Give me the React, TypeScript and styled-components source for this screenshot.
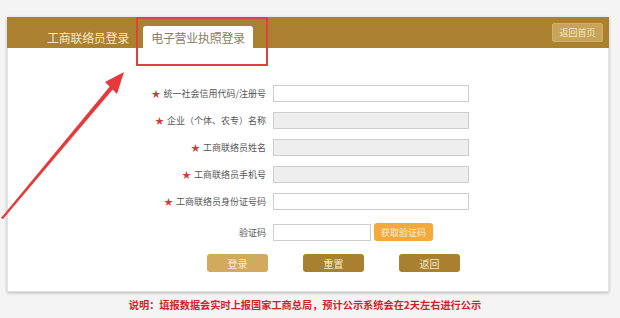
import { Fragment } from 'react';
import styled, { createGlobalStyle } from 'styled-components';

const GlobalStyle = createGlobalStyle`
  html, body {
    margin: 0;
    padding: 0;
    background: #f4f4f4;
  }
  body {
    font-family: "Noto Sans CJK SC", "Noto Sans", sans-serif;
  }
`;

const Page = styled.div`
  position: relative;
  width: 620px;
  height: 318px;
  padding: 17px 0 0 7px;
  box-sizing: border-box;
  overflow: hidden;
`;

const Panel = styled.div`
  width: 602px;
  background: #fff;
  border: 1px solid #e2e2e2;
  border-top: none;
  box-sizing: border-box;
  box-shadow: 0 1px 3px rgba(0, 0, 0, 0.25);
`;

const Header = styled.div`
  height: 31px;
  background: #aa812f;
  display: flex;
  align-items: flex-end;
  padding: 0 6px 0 26px;
  margin: 0 -1px;
`;

const Tabs = styled.div`
  display: flex;
  flex: 1;
`;

const Tab = styled.div<{ $active?: boolean }>`
  width: 110px;
  height: 22px;
  display: flex;
  align-items: center;
  justify-content: center;
  font-size: 12px;
  letter-spacing: -0.3px;
  color: ${(p) => (p.$active ? '#8d7d5f' : '#f6e7c6')};
  background: ${(p) => (p.$active ? '#fff' : 'transparent')};
  border-radius: 3px 3px 0 0;
`;

const HomeButton = styled.div`
  align-self: center;
  width: 51px;
  height: 19px;
  display: flex;
  align-items: center;
  justify-content: center;
  background: #c7a459;
  border: 1px solid #d2b06a;
  box-sizing: border-box;
  border-radius: 2px;
  color: #f3e6c6;
  font-size: 9px;
`;

const Body = styled.div`
  height: 243px;
  padding-top: 37px;
  box-sizing: border-box;
`;

const FormGrid = styled.div`
  display: grid;
  grid-template-columns: 150px 196px;
  column-gap: 7px;
  row-gap: 10px;
  margin-left: 108px;
  align-items: center;
`;

const Label = styled.div<{ $offset?: boolean }>`
  text-align: right;
  font-size: 9px;
  color: #555;
  white-space: nowrap;
  line-height: 17px;
  margin-top: ${(p) => (p.$offset ? '3px' : '0')};
`;

const Star = styled.span`
  color: #d63a3a;
  font-size: 9px;
  margin-right: 3px;
`;

const Input = styled.div<{ $disabled?: boolean }>`
  height: 17px;
  border: 1px solid #cdcdcd;
  box-sizing: border-box;
  background: ${(p) => (p.$disabled ? '#eeeeee' : '#fff')};
`;

const CodeRow = styled.div`
  display: flex;
  align-items: center;
  gap: 3px;
  margin-top: 3px;
`;

const CodeInput = styled(Input)`
  width: 98px;
`;

const CodeButton = styled.div`
  width: 59px;
  height: 18px;
  background: #f4a93b;
  border-radius: 3px;
  color: #fdf0d8;
  font-size: 9px;
  display: flex;
  align-items: center;
  justify-content: center;
`;

const Actions = styled.div`
  display: flex;
  gap: 35px;
  margin: 13px 0 0 199px;
`;

const ActionButton = styled.div<{ $light?: boolean }>`
  width: 61px;
  height: 18px;
  border-radius: 3px;
  background: ${(p) => (p.$light ? '#d3aa5d' : '#a9802f')};
  color: #f6ead0;
  font-size: 10px;
  display: flex;
  align-items: center;
  justify-content: center;
`;

const Note = styled.div`
  width: 602px;
  margin-top: 7px;
  text-align: center;
  font-size: 10.2px;
  font-weight: bold;
  color: #d31f2a;
  line-height: 12px;
  padding-right: 6px;
  box-sizing: border-box;
`;

const Highlight = styled.div`
  position: absolute;
  left: 136px;
  top: 17px;
  width: 132px;
  height: 49px;
  border: 2px solid #e2403c;
  box-sizing: border-box;
  pointer-events: none;
`;

const Arrow = styled.svg`
  position: absolute;
  left: 0;
  top: 0;
  pointer-events: none;
`;

const fields = [
  { label: '统一社会信用代码/注册号', disabled: false },
  { label: '企业（个体、农专）名称', disabled: true },
  { label: '工商联络员姓名', disabled: true },
  { label: '工商联络员手机号', disabled: true },
  { label: '工商联络员身份证号码', disabled: false },
];

export default function App() {
  return (
    <>
      <GlobalStyle />
      <Page>
        <Panel>
          <Header>
            <Tabs>
              <Tab>工商联络员登录</Tab>
              <Tab $active>电子营业执照登录</Tab>
            </Tabs>
            <HomeButton>返回首页</HomeButton>
          </Header>
          <Body>
            <FormGrid>
              {fields.map((f) => (
                <Fragment key={f.label}>
                  <Label>
                    <Star>★</Star>
                    {f.label}
                  </Label>
                  <Input $disabled={f.disabled} />
                </Fragment>
              ))}
              <Label $offset>验证码</Label>
              <CodeRow>
                <CodeInput />
                <CodeButton>获取验证码</CodeButton>
              </CodeRow>
            </FormGrid>
            <Actions>
              <ActionButton $light>登录</ActionButton>
              <ActionButton>重置</ActionButton>
              <ActionButton>返回</ActionButton>
            </Actions>
          </Body>
        </Panel>
        <Note>说明：填报数据会实时上报国家工商总局，预计公示系统会在2天左右进行公示</Note>
        <Highlight />
        <Arrow width="620" height="318" viewBox="0 0 620 318">
          <polygon points="1,218 3,219 114,88 111,85" fill="#e5393b" />
          <polygon points="124,72 105,82 117,94" fill="#e5393b" />
        </Arrow>
      </Page>
    </>
  );
}
